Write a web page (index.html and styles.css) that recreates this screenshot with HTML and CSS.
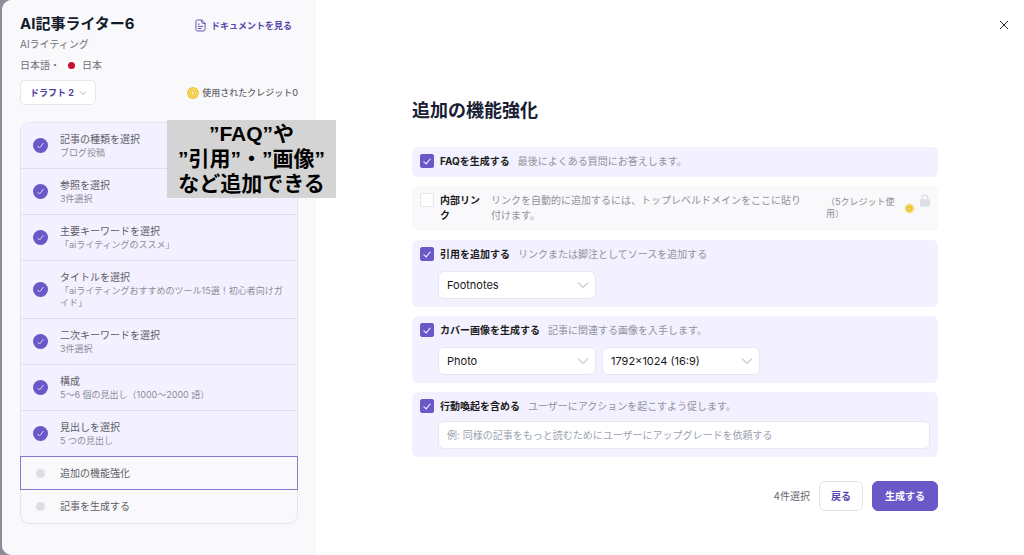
FILE: index.html
```html
<!DOCTYPE html>
<html lang="ja">
<head>
<meta charset="utf-8">
<meta name="viewport" content="width=device-width, initial-scale=1">
<title>AI記事ライター6</title>
<link rel="stylesheet" href="styles.css">
</head>
<body>
<div class="modal">
  <aside class="sidebar">
    <header class="side-head">
      <h1 class="side-title">AI記事ライター6</h1>
      <a class="doc-link" href="#">
        <svg class="doc-icon" viewBox="0 0 12 14" fill="none" stroke="currentColor" stroke-linecap="round" stroke-linejoin="round"><path d="M7.3 1H2.6C1.7 1 1 1.7 1 2.6v8.8c0 .9.7 1.6 1.6 1.6h6.8c.9 0 1.6-.7 1.6-1.6V4.7L7.3 1v2.5c0 .7.5 1.2 1.2 1.2H11M3.5 5.5h1.2M3.5 8h5M3.5 10.3h3.2"/></svg>
        <span>ドキュメントを見る</span>
      </a>
    </header>
    <p class="meta">AIライティング</p>
    <p class="meta">日本語・<span class="flag"></span>日本</p>
    <div class="draft-row">
      <button class="draft" type="button">ドラフト 2
        <svg class="draft-chevron" viewBox="0 0 8 6" fill="none" stroke="currentColor"><path d="M1 1.5l3 3 3-3"/></svg>
      </button>
      <span class="credits">
        <svg class="coin" viewBox="0 0 12 12"><circle cx="6" cy="6" r="6" fill="#eec734"/><circle cx="6" cy="6" r="4.4" fill="none" stroke="#fbeaa2" stroke-width=".7"/><circle cx="6" cy="6" r="2.6" fill="none" stroke="#fbeaa2" stroke-width=".7"/><circle cx="6" cy="6" r="1.1" fill="#fffbe5"/></svg>
        使用されたクレジット0
      </span>
    </div>
    <ol class="steps">
      <li class="step done"><span class="mark"><svg viewBox="0 0 15 15"><path d="M4.5 8l2 2 4-5"/></svg></span><div><p class="step-name">記事の種類を選択</p><p class="step-note">ブログ投稿</p></div></li>
      <li class="step done"><span class="mark"><svg viewBox="0 0 15 15"><path d="M4.5 8l2 2 4-5"/></svg></span><div><p class="step-name">参照を選択</p><p class="step-note">3件選択</p></div></li>
      <li class="step done"><span class="mark"><svg viewBox="0 0 15 15"><path d="M4.5 8l2 2 4-5"/></svg></span><div><p class="step-name">主要キーワードを選択</p><p class="step-note">「aiライティングのススメ」</p></div></li>
      <li class="step done"><span class="mark"><svg viewBox="0 0 15 15"><path d="M4.5 8l2 2 4-5"/></svg></span><div><p class="step-name">タイトルを選択</p><p class="step-note">「aiライティングおすすめのツール15選！初心者向けガイド」</p></div></li>
      <li class="step done"><span class="mark"><svg viewBox="0 0 15 15"><path d="M4.5 8l2 2 4-5"/></svg></span><div><p class="step-name">二次キーワードを選択</p><p class="step-note">3件選択</p></div></li>
      <li class="step done"><span class="mark"><svg viewBox="0 0 15 15"><path d="M4.5 8l2 2 4-5"/></svg></span><div><p class="step-name">構成</p><p class="step-note">5〜6 個の見出し（1000〜2000 語）</p></div></li>
      <li class="step done"><span class="mark"><svg viewBox="0 0 15 15"><path d="M4.5 8l2 2 4-5"/></svg></span><div><p class="step-name">見出しを選択</p><p class="step-note">5 つの見出し</p></div></li>
      <li class="step current"><span class="mark"></span><p class="step-name">追加の機能強化</p></li>
      <li class="step"><span class="mark"></span><p class="step-name">記事を生成する</p></li>
    </ol>
  </aside>

  <main class="main">
    <form class="panel">
      <h2 class="panel-title">追加の機能強化</h2>
      <div class="cards">
        <section class="card on">
          <div class="option">
            <input class="check" type="checkbox" id="faq" checked>
            <label class="name" for="faq">FAQを生成する</label>
            <span class="desc">最後によくある質問にお答えします。</span>
          </div>
        </section>
        <section class="card">
          <div class="option">
            <input class="check" type="checkbox" id="links">
            <label class="name name-narrow" for="links">内部リンク</label>
            <span class="desc desc-wide">リンクを自動的に追加するには、トップレベルドメインをここに貼り付けます。</span>
            <span class="cost">（5クレジット使用）</span>
            <svg class="cost-coin" viewBox="0 0 10 10"><circle cx="5" cy="5" r="5" fill="#f3d559"/><circle cx="5" cy="5" r="2.8" fill="#eac02c"/><circle cx="5" cy="5" r="1.2" fill="#f8e28a"/></svg>
            <svg class="lock" viewBox="0 0 10 13"><path d="M2.3 6V3.7a2.7 2.7 0 0 1 5.4 0V6" fill="none" stroke="#dedee3" stroke-width="1.2"/><rect y="5.3" width="10" height="7.2" rx="1.4" fill="#dedee3"/></svg>
          </div>
        </section>
        <section class="card on">
          <div class="option">
            <input class="check" type="checkbox" id="cite" checked>
            <label class="name" for="cite">引用を追加する</label>
            <span class="desc">リンクまたは脚注としてソースを追加する</span>
          </div>
          <div class="fields">
            <div class="select"><select aria-label="引用の形式"><option>Footnotes</option></select><svg viewBox="0 0 12 8"><path d="M1 1.5l5 5 5-5"/></svg></div>
          </div>
        </section>
        <section class="card on">
          <div class="option">
            <input class="check" type="checkbox" id="cover" checked>
            <label class="name" for="cover">カバー画像を生成する</label>
            <span class="desc">記事に関連する画像を入手します。</span>
          </div>
          <div class="fields">
            <div class="select"><select aria-label="画像の種類"><option>Photo</option></select><svg viewBox="0 0 12 8"><path d="M1 1.5l5 5 5-5"/></svg></div>
            <div class="select"><select aria-label="画像サイズ"><option>1792×1024 (16:9)</option></select><svg viewBox="0 0 12 8"><path d="M1 1.5l5 5 5-5"/></svg></div>
          </div>
        </section>
        <section class="card on">
          <div class="option">
            <input class="check" type="checkbox" id="cta" checked>
            <label class="name" for="cta">行動喚起を含める</label>
            <span class="desc">ユーザーにアクションを起こすよう促します。</span>
          </div>
          <div class="fields fields-close">
            <input class="text" type="text" aria-label="行動喚起" placeholder="例: 同様の記事をもっと読むためにユーザーにアップグレードを依頼する">
          </div>
        </section>
      </div>
      <footer class="actions">
        <span class="count">4件選択</span>
        <button class="btn" type="button">戻る</button>
        <button class="btn primary" type="button">生成する</button>
      </footer>
    </form>
  </main>
  <button class="close" type="button" aria-label="閉じる"><svg viewBox="0 0 10 10"><path d="M1 1l8 8M9 1L1 9"/></svg></button>
  <p class="callout">”FAQ”や<br>”引用”・”画像”<br>など追加できる</p>
</div>
</body>
</html>
```

FILE: styles.css
```css
* { box-sizing: border-box; }
body {
  margin: 0;
  background: #8d8e9c;
  font-family: Inter, "Noto Sans CJK JP", sans-serif;
  font-size: 10px;
  line-height: 15px;
  color: #18181b;
}
h1, h2, p, ol { margin: 0; padding: 0; }
button, input, select { font: inherit; }
svg { display: block; flex: none; }

.modal {
  position: relative;
  display: flex;
  min-height: 100vh;
  margin-left: 2px;
  background: #fff;
  border-radius: 10px 0 0 10px;
  overflow: hidden;
}

.sidebar { flex: none; width: 314px; padding: 13px 18px 24px; background: #f9f9fb; }
.side-head { display: flex; justify-content: space-between; align-items: center; height: 21px; padding-right: 6px; }
.side-title { font-size: 15px; line-height: 20px; font-weight: 700; color: #121a2c; }
.doc-link { display: flex; align-items: center; gap: 5px; padding-top: 3px; font-size: 9px; font-weight: 700; color: #5746af; text-decoration: none; }
.doc-icon { width: 11px; height: 13px; }
.meta { display: flex; align-items: center; height: 21px; color: #6f6f78; }
.flag { display: flex; align-items: center; justify-content: center; width: 14px; height: 10px; margin: 0 4px; background: #fff; }
.flag::before { content: ""; width: 7px; height: 7px; border-radius: 50%; background: #c8102e; }

.draft-row { display: flex; justify-content: space-between; align-items: center; margin: 4px 0 17px; }
.draft { display: flex; align-items: center; gap: 5px; height: 25px; padding: 0 8px 0 9px; font-size: 9px; font-weight: 700; color: #4c3d9f; background: #fff; border: 1px solid #e7e7ea; border-radius: 5px; }
.draft-chevron { width: 8px; height: 6px; color: #b0b0b8; }
.credits { display: flex; align-items: center; gap: 3px; font-size: 9px; font-weight: 500; color: #66666d; }
.coin { width: 12px; height: 12px; }

.steps { list-style: none; border: 1px solid #e4e4ea; border-radius: 9px; }
.step { display: flex; align-items: center; gap: 12px; padding: 9px 12px; }
.step.done { background: #f3f1ff; border-bottom: 1px solid #e1dfed; }
.step:first-child { border-radius: 8px 8px 0 0; }
.step.current { margin: -1px -1px 0; padding: 9px 12px 8px; border: 1px solid #8576cf; }
.mark { flex: none; display: flex; align-items: center; justify-content: center; width: 15px; height: 15px; }
.mark:empty::before { content: ""; width: 9px; height: 9px; border-radius: 50%; background: #dedee2; }
.done .mark { border-radius: 50%; background: #6a58c8; }
.mark svg { width: 15px; height: 15px; fill: none; stroke: #d9d3f7; stroke-width: 1; }
.step-name { color: #5e5e66; }
.step-note { font-size: 9px; line-height: 12px; color: #8d8c98; }

.main { flex: 1; min-width: 0; padding: 99px 40px 40px 50px; }
.panel { max-width: 526px; margin: 0 auto; }
.panel-title { margin-bottom: 24px; font-size: 18px; line-height: 24px; font-weight: 700; color: #182033; }
.cards { display: flex; flex-direction: column; gap: 9px; }
.card { padding: 7px 8px 8px; background: #f9f9fb; border-radius: 6px; }
.card.on { background: #f3f1ff; }
.option { display: flex; align-items: flex-start; gap: 6px; }
.check { appearance: none; flex: none; display: flex; align-items: center; justify-content: center; width: 14px; height: 14px; margin: 0; background: #fff; border: 1px solid #e4e4e8; border-radius: 2px; }
.check:checked { background: #6a58c8; border-color: #6a58c8; }
.check:checked::before { content: ""; width: 3px; height: 6px; margin-bottom: 1px; border: solid #fff; border-width: 0 1px 1px 0; transform: rotate(40deg); }
.name { margin-right: 2px; font-weight: 700; color: #1c1c20; }
.name-narrow { width: 43px; }
.desc { color: #92919c; }
.desc-wide { flex: 1; padding-right: 16px; }
.cost { width: 73px; font-size: 9px; line-height: 12px; padding-top: 3px; color: #8d8c96; }
.cost-coin { width: 9px; height: 9px; margin-top: 11px; }
.lock { width: 10px; height: 13px; margin-top: 1px; }

.fields { display: flex; gap: 6px; padding: 9px 0 0 18px; }
.fields-close { padding-top: 7px; }
.select { position: relative; width: 158px; }
.select select { width: 100%; height: 28px; padding: 0 28px 0 8px; appearance: none; font-size: 11px; color: #18181b; background: #fff; border: 1px solid #e8e7f0; border-radius: 6px; }
.select svg { position: absolute; right: 7px; top: 10px; width: 12px; height: 8px; fill: none; stroke: #a3a9b8; pointer-events: none; }
.text { width: 100%; height: 28px; padding: 0 8px; background: #fff; border: 1px solid #e8e7f0; border-radius: 6px; }
.text::placeholder { color: #9ca3af; }

.actions { display: flex; justify-content: flex-end; align-items: center; gap: 9px; margin-top: 24px; }
.count { color: #66666d; }
.btn { height: 30px; padding: 0 11px; font-weight: 700; color: #5746af; background: #fff; border: 1px solid #e4e4e8; border-radius: 6px; }
.primary { padding: 0 12px; color: #fff; background: #6a58c8; border-color: #6a58c8; }

.close { position: absolute; top: 15px; right: 10px; display: flex; align-items: center; justify-content: center; width: 20px; height: 20px; padding: 0; background: none; border: 0; }
.close svg { width: 10px; height: 10px; fill: none; stroke: #252b3a; stroke-width: 1; }
.callout { position: absolute; left: 165px; top: 120px; width: 169px; padding: 1px 0 2px; font-family: "Liberation Sans", "Noto Sans CJK JP", sans-serif; font-size: 21px; line-height: 25px; font-weight: 700; text-align: center; color: #000; background: #d4d4d4; }
```
